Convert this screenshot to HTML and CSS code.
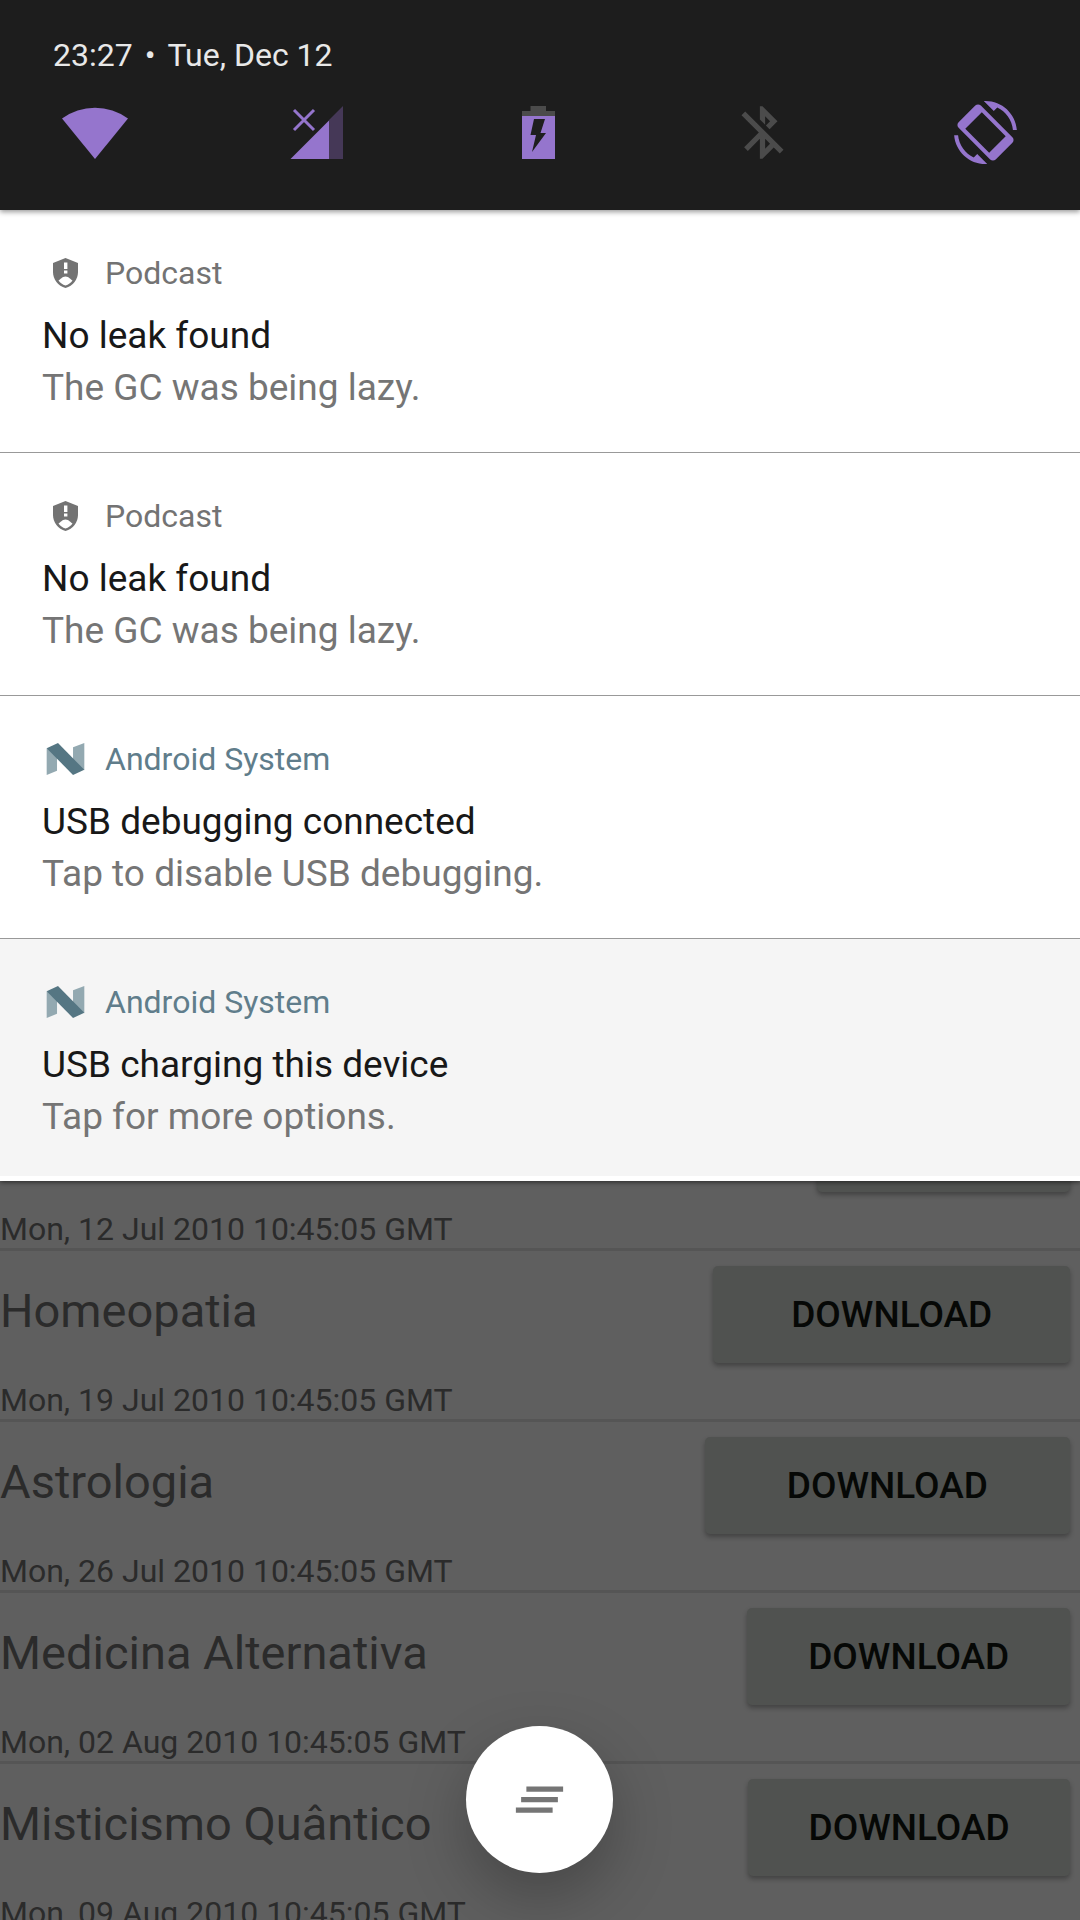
FILE: index.html
```html
<!DOCTYPE html>
<html lang="en">
<head>
<meta charset="utf-8">
<meta name="viewport" content="width=device-width, initial-scale=1">
<title>Notifications</title>
<link rel="stylesheet" href="styles.css">
</head>
<body>
<svg class="defs" aria-hidden="true">
  <symbol id="shield" viewBox="0 0 25 30">
    <path fill="currentColor" d="M12.500 0 25 5v9c0 7.500-5 13.800-12.500 16C5 27.800 0 21.500 0 14V5z"/>
    <path fill="#fff" d="M11 4.500h3.400V11H11zM11 12.500h3.400v3H11zM5.500 22.500c2-1 3.500-4 7-4s5 3 7 4c-1.800 2.500-4 4-7 5-3-1-5.200-2.500-7-5z"/>
  </symbol>
  <symbol id="nougat" viewBox="0 0 40 34">
    <path fill="#93a9b1" d="M0 5.500V34l11-4.500V12z"/>
    <path fill="#93a9b1" d="M40 0v29L28 22V4.500z"/>
    <path fill="#557683" d="M0 5.500 12 0l28 28.500L28 34z"/>
  </symbol>
</svg>
<div class="screen">
  <section class="shade">
    <header class="status">
      <div class="status-line"><time>23:27</time><span>•</span><time>Tue, Dec 12</time></div>
      <div class="status-icons">
        <svg class="status-icon" viewBox="0 0 63 63" role="img" aria-label="Wi-Fi"><path fill="#9575cd" d="M32 58 65 17.500A56 56 0 0 0-1 17.500z"/></svg>
        <svg class="status-icon" viewBox="0 0 63 63" role="img" aria-label="Mobile signal, no data"><path fill="#453857" d="M57 5v53H43V19z"/><path fill="#9575cd" d="M4.500 58 43 19.500V58z"/><path stroke="#9575cd" stroke-width="3" d="m8 9 20 20m0-20-20 20"/></svg>
        <svg class="status-icon" viewBox="0 0 63 63" role="img" aria-label="Battery charging"><path fill="#4b4b4b" d="M21.500 5h15.500v5h9v6H13v-6h8.500z"/><path fill="#9575cd" d="M13 15h33v43H13z"/><path fill="#1e1e1e" d="M25 18h11l-4.500 14H37L23 51l4-17h-5.500z"/></svg>
        <svg class="status-icon" viewBox="0 0 24 24" role="img" aria-label="Bluetooth off"><path fill="#4b4b4b" d="M13 5.830l1.880 1.880-1.600 1.600 1.410 1.410 3.020-3.020L12 2h-1v5.030l2 2v-3.200zM5.410 4L4 5.410 10.590 12 5 17.590 6.410 19 11 14.410V22h1l4.290-4.290 2.300 2.290L20 18.590 5.410 4zM13 18.170v-3.760l1.880 1.880L13 18.170z"/></svg>
        <svg class="status-icon" viewBox="0 0 24 24" role="img" aria-label="Auto-rotate"><path fill="#9575cd" d="M16.480 2.520c3.270 1.550 5.610 4.720 5.970 8.480h1.500C23.440 4.840 18.290 0 12 0l-.66.030 3.810 3.810 1.330-1.320zm-6.250-.77c-.59-.59-1.540-.59-2.120 0L1.750 8.110c-.59.590-.59 1.540 0 2.120l12.020 12.020c.59.590 1.540.590 2.120 0l6.360-6.360c.59-.59.590-1.540 0-2.120L10.230 1.750zM13.400 19.700 4.300 10.600 10.600 4.300l9.100 9.100zM7.520 21.480C4.250 19.940 1.910 16.760 1.550 13H.05C.56 19.160 5.710 24 12 24l.66-.03-3.810-3.810-1.330 1.320z"/></svg>
      </div>
    </header>
    <article class="notice">
      <div class="notice-app"><svg class="notice-icon notice-icon--shield" aria-hidden="true"><use href="#shield"/></svg><span>Podcast</span></div>
      <h2 class="notice-title">No leak found</h2>
      <p class="notice-text">The GC was being lazy.</p>
    </article>
    <article class="notice">
      <div class="notice-app"><svg class="notice-icon notice-icon--shield" aria-hidden="true"><use href="#shield"/></svg><span>Podcast</span></div>
      <h2 class="notice-title">No leak found</h2>
      <p class="notice-text">The GC was being lazy.</p>
    </article>
    <article class="notice">
      <div class="notice-app notice-app--system"><svg class="notice-icon" aria-hidden="true"><use href="#nougat"/></svg><span>Android System</span></div>
      <h2 class="notice-title">USB debugging connected</h2>
      <p class="notice-text">Tap to disable USB debugging.</p>
    </article>
    <article class="notice notice--quiet">
      <div class="notice-app notice-app--system"><svg class="notice-icon" aria-hidden="true"><use href="#nougat"/></svg><span>Android System</span></div>
      <h2 class="notice-title">USB charging this device</h2>
      <p class="notice-text">Tap for more options.</p>
    </article>
  </section>

  <main class="podcast">
    <ul class="episodes">
      <li class="episode">
        <div class="episode-main episode-main--covered"><button class="download download--covered" type="button" aria-label="Download"></button></div>
        <time class="episode-date">Mon, 12 Jul 2010 10:45:05 GMT</time>
      </li>
      <li class="episode">
        <div class="episode-main"><span class="episode-title">Homeopatia</span><button class="download" type="button">Download</button></div>
        <time class="episode-date">Mon, 19 Jul 2010 10:45:05 GMT</time>
      </li>
      <li class="episode">
        <div class="episode-main"><span class="episode-title">Astrologia</span><button class="download" type="button">Download</button></div>
        <time class="episode-date">Mon, 26 Jul 2010 10:45:05 GMT</time>
      </li>
      <li class="episode">
        <div class="episode-main"><span class="episode-title">Medicina Alternativa</span><button class="download" type="button">Download</button></div>
        <time class="episode-date">Mon, 02 Aug 2010 10:45:05 GMT</time>
      </li>
      <li class="episode">
        <div class="episode-main"><span class="episode-title">Misticismo Quântico</span><button class="download" type="button">Download</button></div>
        <time class="episode-date">Mon, 09 Aug 2010 10:45:05 GMT</time>
      </li>
    </ul>
  </main>

  <button class="clear-all" type="button" aria-label="Clear all notifications">
    <svg class="clear-all-icon" viewBox="0 0 24 24" aria-hidden="true"><path fill="#757575" d="M5 13h14v-2H5v2zm-2 4h14v-2H3v2zM7 7v2h14V7H7z"/></svg>
  </button>
</div>
</body>
</html>
```
FILE: styles.css
```css
* {
  box-sizing: border-box;
}

body {
  margin: 0;
  background: #5f5f5f;
  font-family: Roboto, sans-serif;
}

.defs {
  display: none;
}

.screen {
  position: relative;
  display: flex;
  flex-direction: column;
  height: 100vh;
  overflow: hidden;
}

/* Notification shade */

.shade {
  position: relative;
  z-index: 1;
  flex: none;
  background: #fff;
  box-shadow: 0 1px 5px rgba(0, 0, 0, 0.6);
}

.status {
  position: relative;
  padding: 35px 63px 46px;
  background: #1d1d1d;
  box-shadow: 0 2px 5px rgba(0, 0, 0, 0.4);
}

.status-line {
  display: flex;
  gap: 12px;
  margin: 0 -10px 26px;
  color: #e8e8e8;
  font-size: 32px;
  line-height: 40px;
}

.status-icons {
  display: flex;
  justify-content: space-between;
}

.status-icon {
  width: 63px;
  height: 63px;
  overflow: visible;
}

.notice {
  padding: 43px 42px 38px;
  border-bottom: 1px solid #999;
}

.notice--quiet {
  padding-bottom: 33px;
  border-bottom: 5px solid #fff;
  background: #f5f5f5;
}

.notice-app {
  display: flex;
  align-items: center;
  gap: 16px;
  margin-bottom: 17px;
  color: #737373;
  font-size: 32px;
  line-height: 40px;
}

.notice-app--system {
  color: #607d8b;
}

.notice-icon {
  width: 47px;
  height: 32px;
}

.notice-icon--shield {
  height: 30px;
}

.notice-title,
.notice-text {
  margin: 0;
  font-size: 37px;
  font-weight: 400;
  line-height: 52px;
}

.notice-title {
  color: #181818;
}

.notice-text {
  color: #757575;
}

/* Podcast list, dimmed behind the shade */

.podcast {
  flex: 1;
  min-height: 0;
  overflow: hidden;
}

/* The list is scrolled part of a row under the shade. */
.episodes {
  margin: -101px 0 0;
  padding: 0;
  list-style: none;
}

.episode {
  border-bottom: 3px solid #555;
  color: #2b2b2b;
}

.episode-main {
  display: flex;
  align-items: baseline;
  height: 131px;
}

.episode-main--covered {
  align-items: flex-start;
  justify-content: flex-end;
}

.episode-title {
  flex: 4 1 auto;
  font-size: 47px;
  line-height: 56px;
}

.download {
  flex: 1 1 auto;
  height: 97px;
  margin: 15px 10px 0;
  padding: 0 22px;
  border: 0;
  border-radius: 5px;
  background: #505250;
  box-shadow: 0 3px 5px rgba(0, 0, 0, 0.3);
  color: #060806;
  font: 500 37px/44px Roboto, sans-serif;
  text-transform: uppercase;
}

.download--covered {
  flex: 0 0 253px;
}

.episode-date {
  display: block;
  font-size: 32px;
  line-height: 37px;
}

.clear-all {
  position: absolute;
  z-index: 2;
  bottom: 47px;
  left: 50%;
  display: grid;
  place-items: center;
  width: 147px;
  height: 147px;
  margin-left: -74px;
  padding: 0;
  border: 0;
  border-radius: 50%;
  background: #fff;
  box-shadow: 0 24px 60px rgba(0, 0, 0, 0.25);
}

.clear-all-icon {
  width: 63px;
  height: 63px;
}
```
